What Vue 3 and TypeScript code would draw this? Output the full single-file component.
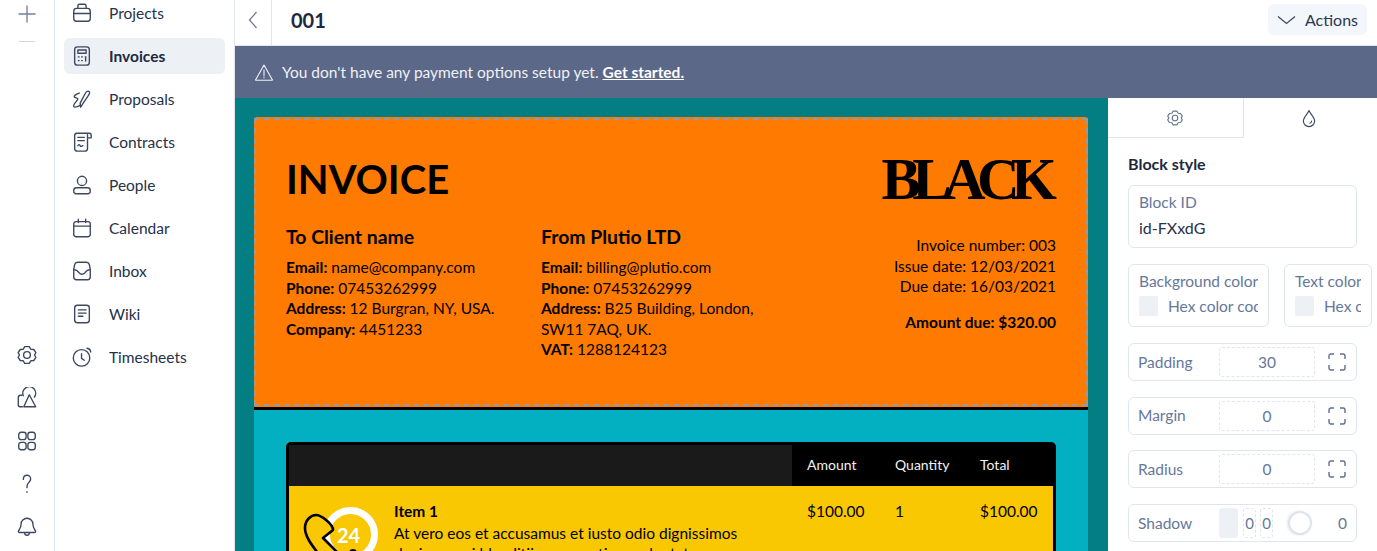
<script setup lang="ts">
interface NavItem { label: string; paths: string[]; active?: boolean }

const nav: NavItem[] = [
  { label: 'Projects', paths: ['M3 10a3 3 0 0 1 3-3h12a3 3 0 0 1 3 3v8a3 3 0 0 1-3 3H6a3 3 0 0 1-3-3z', 'M7.500 7V4.500a2 2 0 0 1 2-2h5a2 2 0 0 1 2 2V7', 'M3 12.500h18'] },
  { label: 'Invoices', active: true, paths: ['M7 2h10a3 3 0 0 1 3 3v14a3 3 0 0 1-3 3H7a3 3 0 0 1-3-3V5a3 3 0 0 1 3-3z', 'M7.500 5.500h9v3.500h-9z', 'M8 13h.8M11.600 13h.8M15.500 13h.8M8 17h.8M11.600 17h.8M16 13v4.500'] },
  { label: 'Proposals', paths: ['M14 15.500l-3.500 5.500-.5-4.500L15.500 6c.8-1.700 2-2.800 3.500-2.500 1.500.5 1.500 2 .8 3.500z', 'M9 5.500C6 6.500 3 8.500 3.500 9.500c.5 1.500 4 1 4 2.500 0 2-5.500 5.500-4.500 8 .8 1.500 4 .5 7-1'] },
  { label: 'Contracts', paths: ['M18 4v15a3 3 0 0 1-3 3H7a3 3 0 0 1-3-3V5a2.500 2.500 0 0 1 2.500-2.500H20a2 2 0 0 1 2 2V7.500h-4', 'M7.500 7h7M7.500 10.500h7', 'M7.500 16c1-1.500 2-1.500 2.500 0s1.500.5 3 0'] },
  { label: 'People', paths: ['M12 2.500a5 5 0 1 1 0 10 5 5 0 0 1 0-10z', 'M6 15h12a3 3 0 0 1 3 3v1a2.500 2.500 0 0 1-2.500 2.500h-13A2.500 2.500 0 0 1 3 19v-1a3 3 0 0 1 3-3z'] },
  { label: 'Calendar', paths: ['M5.500 5h13A2.500 2.500 0 0 1 21 7.500V19a2.500 2.500 0 0 1-2.500 2.500h-13A2.500 2.500 0 0 1 3 19V7.500A2.500 2.500 0 0 1 5.500 5z', 'M3 10h18', 'M8 2.500V6M16 2.500V6'] },
  { label: 'Inbox', paths: ['M7 2.500h10c1.500 0 2.500 1 3 2.500l1 5v8.500a3 3 0 0 1-3 3H6a3 3 0 0 1-3-3V10l1-5c.5-1.500 1.500-2.500 3-2.500z', 'M3 10.500c2 0 4.500 1.500 6 3.500 1.500 2 4.500 2 6 0s4-3.500 6-3.500'] },
  { label: 'Wiki', paths: ['M7 2.500h10a3 3 0 0 1 3 3v13a3 3 0 0 1-3 3H7a3 3 0 0 1-3-3v-13a3 3 0 0 1 3-3z', 'M8 7.500h8.500M8 11h8.500M8 14.500h5'] },
  { label: 'Timesheets', paths: ['M11.500 4a9 9 0 1 1 0 18 9 9 0 0 1 0-18z', 'M11.500 8.500V13.500l3 2', 'M17.500 2.500c2 .3 3.800 1.800 4 4'] }
]

const railIcons: string[][] = [
  ['M9.500 2.800h5l1.600 2.900 3.300.3 2.300 3.500-1.500 2.500 1.500 2.500-2.300 3.500-3.300.3-1.600 2.900h-5l-1.600-2.900-3.300-.3L2.300 14.500 3.800 12 2.300 9.500 4.600 6l3.300-.3z', 'M12 8.300a3.700 3.700 0 1 1 0 7.400 3.700 3.700 0 0 1 0-7.400z'],
  ['M6.500 9H5a2.500 2.500 0 0 0-2.500 2.500v8a2 2 0 0 0 2 2H7', 'M8 9.500A7 7 0 1 1 20 11', 'M14.500 8.500l7 13h-13z'],
  ['M5.500 2.500h3A2.500 2.500 0 0 1 11 5v3a2.500 2.500 0 0 1-2.500 2.500h-3A2.500 2.500 0 0 1 3 8V5a2.500 2.500 0 0 1 2.500-2.500z', 'M15.500 2.500h3A2.500 2.500 0 0 1 21 5v3a2.500 2.500 0 0 1-2.500 2.500h-3A2.500 2.500 0 0 1 13 8V5a2.500 2.500 0 0 1 2.500-2.500z', 'M5.500 13.500h3A2.500 2.500 0 0 1 11 16v3a2.500 2.500 0 0 1-2.500 2.500h-3A2.500 2.500 0 0 1 3 19v-3a2.500 2.500 0 0 1 2.500-2.500z', 'M15.500 13.500h3A2.500 2.500 0 0 1 21 16v3a2.500 2.500 0 0 1-2.500 2.500h-3A2.500 2.500 0 0 1 13 19v-3a2.500 2.500 0 0 1 2.500-2.500z'],
  ['M8 7c0-3 2-4.500 4-4.500s4 1.500 4 4c0 3.500-4 4-4 8V16', 'M12 20.500v.5'],
  ['M12 2.500a6.500 6.500 0 0 1 6.500 6.500c0 5 3 6.500 3 8 0 .8-.5 1-1.500 1H4c-1 0-1.500-.2-1.500-1 0-1.500 3-3 3-8A6.500 6.500 0 0 1 12 2.500z', 'M9.500 18.500a2.500 2.500 0 0 0 5 0']
]

const boxes = [
  { label: 'Padding', value: '30' },
  { label: 'Margin', value: '0' },
  { label: 'Radius', value: '0' }
]

const expand = 'M1 6V3a2 2 0 0 1 2-2h3M12 1h3a2 2 0 0 1 2 2v3M17 12v3a2 2 0 0 1-2 2h-3M6 17H3a2 2 0 0 1-2-2v-3'
</script>

<template>
  <div class="shell">
    <aside class="rail">
      <div class="rail-top">
        <svg class="plus" width="20" height="20" viewBox="0 0 20 20"><path d="M10 1.500v17M1.500 10h17" /></svg>
        <span class="rail-dash"></span>
      </div>
      <div class="rail-bottom">
        <svg v-for="(icon, i) in railIcons" :key="i" class="ico" width="22" height="22" viewBox="0 0 24 24">
          <path v-for="(d, j) in icon" :key="j" :d="d" />
        </svg>
      </div>
    </aside>

    <nav class="side">
      <div v-for="item in nav" :key="item.label" class="nav-row" :class="{ active: item.active }">
        <svg class="ico" width="22" height="22" viewBox="0 0 24 24">
          <path v-for="(d, j) in item.paths" :key="j" :d="d" />
        </svg>
        <span>{{ item.label }}</span>
      </div>
    </nav>

    <div class="main">
      <header class="topbar">
        <div class="back">
          <svg width="10" height="18" viewBox="0 0 10 18"><path d="M8.500 1L1.500 9l7 8" /></svg>
        </div>
        <h1>001</h1>
        <div class="actions">
          <svg width="19" height="10" viewBox="0 0 19 10"><path d="M1 1.500l8.500 7 8.500-7" /></svg>
          <span>Actions</span>
        </div>
      </header>

      <div class="banner">
        <svg width="18" height="17" viewBox="0 0 18 17"><path d="M9 1L.8 15.500a.4.4 0 0 0 .4.700h15.600a.4.4 0 0 0 .4-.7z M9 6v5.500 M9 13v.8" /></svg>
        <span>You don't have any payment options setup yet. <a>Get started.</a></span>
      </div>

      <div class="work">
        <div class="canvas">
          <article class="doc">
            <section class="doc-head">
              <div class="title-row">
                <h2>INVOICE</h2>
                <div class="logo">BLACK</div>
              </div>
              <div class="info-row">
                <div class="party to">
                  <h3>To Client name</h3>
                  <p><b>Email:</b> name@company.com</p>
                  <p><b>Phone:</b> 07453262999</p>
                  <p><b>Address:</b> 12 Burgran, NY, USA.</p>
                  <p><b>Company:</b> 4451233</p>
                </div>
                <div class="party from">
                  <h3>From Plutio LTD</h3>
                  <p><b>Email:</b> billing@plutio.com</p>
                  <p><b>Phone:</b> 07453262999</p>
                  <p><b>Address:</b> B25 Building, London,<br />SW11 7AQ, UK.</p>
                  <p><b>VAT:</b> 1288124123</p>
                </div>
                <div class="meta">
                  <p>Invoice number: 003</p>
                  <p>Issue date: 12/03/2021</p>
                  <p>Due date: 16/03/2021</p>
                  <p class="due">Amount due: $320.00</p>
                </div>
              </div>
            </section>

            <section class="doc-body">
              <div class="table">
                <div class="thead">
                  <div class="th-blank"></div>
                  <div class="cell amount">Amount</div>
                  <div class="cell qty">Quantity</div>
                  <div class="cell total">Total</div>
                </div>
                <div class="tr">
                  <div class="thumb">
                    <svg width="90" height="70" viewBox="0 0 90 70">
                      <circle cx="61.500" cy="48.500" r="24" fill="none" stroke="#fff" stroke-width="7" />
                      <path class="phone" d="M16 42C16 34 22 29 27 29C32 29 44 38 44 44L34 52L48 66L48 72L28 72L28 66C22 58 16 50 16 42z" />
                      <circle cx="64" cy="67" r="4" fill="#000" />
                    </svg>
                    <span class="num">24</span>
                  </div>
                  <div class="desc">
                    <strong>Item 1</strong>
                    <p>At vero eos et accusamus et iusto odio dignissimos ducimus qui blanditiis praesentium voluptatum deleniti</p>
                  </div>
                  <div class="cell amount">$100.00</div>
                  <div class="cell qty">1</div>
                  <div class="cell total">$100.00</div>
                </div>
              </div>
            </section>
          </article>
        </div>

        <aside class="panel">
          <div class="tabs">
            <div class="tab off">
              <svg class="ico soft" width="18" height="18" viewBox="0 0 24 24">
                <path v-for="(d, j) in railIcons[0]" :key="j" :d="d" />
              </svg>
            </div>
            <div class="tab drop">
              <svg class="ico" width="18" height="20" viewBox="0 0 24 24">
                <path d="M12 2c-1 3.500-7.500 9.500-7.500 14a7.500 7.500 0 0 0 15 0C19.500 11.500 13 5.500 12 2z" />
                <path d="M13 19c1.500-.3 2.500-1.300 2.500-3" />
              </svg>
            </div>
          </div>

          <div class="panel-body">
            <h4>Block style</h4>
            <div class="field id">
              <label>Block ID</label>
              <div class="val">id-FXxdG</div>
            </div>

            <div class="colors">
              <div class="field color bg">
                <label>Background color</label>
                <div class="hex"><i></i><span>Hex color code</span></div>
              </div>
              <div class="field color fg">
                <label>Text color</label>
                <div class="hex"><i></i><span>Hex color code</span></div>
              </div>
            </div>

            <div v-for="b in boxes" :key="b.label" class="row">
              <span class="row-label">{{ b.label }}</span>
              <span class="dashed wide">{{ b.value }}</span>
              <svg class="exp" width="18" height="18" viewBox="0 0 18 18"><path :d="expand" /></svg>
            </div>

            <div class="row">
              <span class="row-label">Shadow</span>
              <span class="swatch"></span>
              <span class="dashed tiny">0</span>
              <span class="dashed tiny">0</span>
              <span class="knob"></span>
              <span class="last">0</span>
            </div>
          </div>
        </aside>
      </div>
    </div>
  </div>
</template>

<style>
html, body { margin: 0; overflow: hidden; background: #fff; }
</style>

<style scoped>
* { box-sizing: border-box; }
h1, h2, h3, h4, p { margin: 0; }
.shell {
  display: flex;
  width: 1377px;
  height: 551px;
  overflow: hidden;
  font-family: Lato, "Open Sans", sans-serif;
  color: #1e2940;
}
.ico { fill: none; stroke: #3c4760; stroke-width: 1.5; stroke-linecap: round; stroke-linejoin: round; flex: none; }
.ico.soft { stroke: #66758f; }

.rail {
  width: 55px;
  flex: none;
  border-right: 1px solid #dfe6ee;
  display: flex;
  flex-direction: column;
  justify-content: space-between;
  align-items: center;
}
.rail-top { display: flex; flex-direction: column; align-items: center; padding-top: 4px; gap: 17px; }
.plus { fill: none; stroke: #6f7f9c; stroke-width: 1.3; }
.rail-dash { width: 16px; height: 1px; background: #cfd8e3; }
.rail-bottom { display: flex; flex-direction: column; align-items: center; gap: 21px; padding-bottom: 13px; }

.side {
  width: 180px;
  flex: none;
  border-right: 1px solid #dfe6ee;
  padding: 0 9px;
  margin-top: -5px;
  display: flex;
  flex-direction: column;
  gap: 7px;
}
.nav-row {
  height: 36px;
  flex: none;
  display: flex;
  align-items: center;
  gap: 16px;
  padding-left: 7px;
  border-radius: 6px;
  font-size: 15.500px;
  color: #26314a;
}
.nav-row.active { background: #edf1f6; font-weight: 700; color: #1e2940; }

.main { flex: 1; min-width: 0; display: flex; flex-direction: column; }
.topbar {
  height: 46px;
  flex: none;
  display: flex;
  align-items: center;
  border-bottom: 1px solid #dfe6ee;
  padding-right: 10px;
}
.back {
  width: 37px;
  align-self: stretch;
  border-right: 1px solid #dfe6ee;
  display: flex;
  align-items: center;
  justify-content: center;
  padding-bottom: 6px;
}
.back svg { fill: none; stroke: #66758f; stroke-width: 1.2; }
.topbar h1 { font-size: 20px; font-weight: 700; margin: 0 0 6px 19px; flex: 1; color: #1e2940; }
.actions {
  height: 31px;
  width: 99px;
  margin-bottom: 6px;
  display: flex;
  align-items: center;
  gap: 9px;
  padding-left: 9px;
  background: #f3f6fb;
  border-radius: 6px;
  font-size: 16px;
  color: #2b3650;
}
.actions svg { fill: none; stroke: #3c4760; stroke-width: 1.2; }

.banner {
  height: 52px;
  flex: none;
  background: #5c6888;
  display: flex;
  align-items: center;
  gap: 9px;
  padding-left: 20px;
  color: #eef1f6;
  font-size: 15.500px;
}
.banner svg { fill: none; stroke: #eef1f6; stroke-width: 1.1; stroke-linejoin: round; stroke-linecap: round; }
.banner a { color: #fff; font-weight: 700; text-decoration: underline; }

.work { flex: 1; min-height: 0; display: flex; }
.canvas { flex: 1; min-width: 0; background: #037e82; padding: 19px 20px 0 19px; overflow: hidden; }
.doc { width: 834px; }
.doc-head {
  position: relative;
  height: 293px;
  background: #ff7a00;
  border-bottom: 3px solid #000;
  border-radius: 3px 3px 0 0;
  padding: 27px 32px 0 32px;
  color: #000;
}
.doc-head::after {
  content: "";
  position: absolute;
  inset: 1px 0 1px 0;
  border: 2px dashed #a3958f;
  pointer-events: none;
}
.title-row { display: flex; justify-content: space-between; align-items: center; height: 70px; }
.title-row h2 { font-size: 40px; font-weight: 700; line-height: 70px; }
.logo {
  font-family: "Liberation Serif", serif;
  font-weight: 700;
  font-size: 59px;
  letter-spacing: -8.600px;
  line-height: 70px;
  padding-right: 7.600px;
}
.info-row { display: flex; margin-top: 11px; font-size: 15.500px; line-height: 20.500px; }
.party h3 { font-size: 19.400px; font-weight: 700; line-height: 24px; margin-bottom: 8px; }
.to { width: 255px; flex: none; }
.from { flex: 1; }
.meta { text-align: right; padding-top: 10px; }
.meta .due { font-weight: 700; margin-top: 15px; }

.doc-body { background: #03b0c2; padding: 32px 32px 0; height: 200px; }
.table { background: #000; border-radius: 5px 5px 0 0; padding: 3px 3px 0; }
.thead { display: flex; height: 41px; align-items: center; color: #f2f2f2; font-size: 14px; padding-bottom: 2px; }
.th-blank { width: 503px; height: 41px; margin-bottom: -2px; background: #1a1a1a; flex: none; }
.cell { flex: none; }
.amount { padding-left: 15px; width: 103px; }
.qty { width: 85px; }
.total { flex: 1; }
.tr { display: flex; background: #f9c802; height: 100px; color: #000; font-size: 15.500px; line-height: 20px; padding-top: 15px; }
.thumb { width: 105px; flex: none; position: relative; margin-top: -15px; }
.thumb svg { position: absolute; left: 0; top: 0; }
.phone { fill: #f9c802; stroke: #000; stroke-width: 2.600; stroke-linejoin: round; }
.num { position: absolute; left: 48px; top: 37px; color: #fff; font-weight: 700; font-size: 20px; line-height: 24px; }
.desc { width: 398px; flex: none; padding-right: 35px; }
.desc strong { display: block; margin-bottom: 2px; }
.desc p { line-height: 20px; }

.panel { width: 269px; flex: none; background: #fff; overflow: hidden; }
.tabs { display: flex; height: 40px; }
.tab { flex: 1; display: flex; align-items: center; justify-content: center; }
.tab.off { flex: none; width: 136px; border-right: 1px solid #dfe6ee; border-bottom: 1px solid #dfe6ee; padding-right: 2px; }
.tab.drop { padding-right: 3px; }
.panel-body { padding: 16px 20px 0; width: 269px; }
.panel-body h4 { font-size: 16px; font-weight: 700; line-height: 20px; margin-bottom: 11px; }
.field { border: 1px solid #dfe6ee; border-radius: 6px; padding: 5px 10px; }
.field label { display: block; font-size: 15.500px; line-height: 22px; color: #66779a; white-space: nowrap; overflow: hidden; }
.id { width: 229px; height: 63px; }
.val { font-size: 16px; line-height: 26px; color: #26314a; margin-top: 2px; }
.colors { display: flex; gap: 15px; margin-top: 16px; width: 244px; height: 63px; }
.color { flex: none; overflow: hidden; }
.bg { width: 141px; }
.fg { width: 88px; }
.hex { display: flex; align-items: center; gap: 10px; margin-top: 3px; height: 22px; color: #66779a; font-size: 15.500px; white-space: nowrap; overflow: hidden; }
.hex i { width: 19px; height: 20px; background: #edf1f6; border-radius: 2px; flex: none; }
.row {
  width: 229px;
  height: 38px;
  margin-top: 15.700px;
  border: 1px solid #dfe6ee;
  border-radius: 6px;
  display: flex;
  align-items: center;
  padding-left: 9px;
  font-size: 15.500px;
  color: #66779a;
}
.colors + .row { margin-top: 16px; }
.row-label { width: 81px; flex: none; margin-top: -1px; }
.dashed { border: 1px dashed #dfe6ee; border-radius: 3px; height: 30px; display: flex; align-items: center; justify-content: center; flex: none; }
.wide { width: 96px; }
.exp { margin-left: 13px; fill: none; stroke: #5f7096; stroke-width: 1.400; }
.swatch { width: 19px; height: 30px; background: #edf1f6; border-radius: 3px; flex: none; margin-right: 5px; }
.tiny { width: 13px; margin-right: 4px; font-size: 15px; }
.knob { width: 24px; height: 24px; border-radius: 50%; border: 2px solid #dce4ed; background: #fff; box-shadow: -1px 0 3px #e3e9f0; margin-left: 11px; flex: none; }
.last { margin-left: 26px; }
</style>
